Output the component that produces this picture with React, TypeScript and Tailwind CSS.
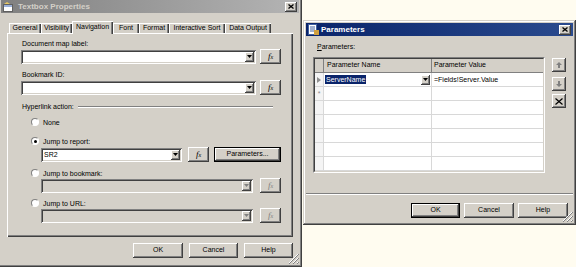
import React from "react";

const face = "bg-[#d4d0c8]";
const raised = "shadow-[inset_-1px_-1px_#404040,inset_1px_1px_#ffffff,inset_-2px_-2px_#808080]";
const sunken = "shadow-[inset_1px_1px_#808080,inset_-1px_-1px_#ffffff,inset_2px_2px_#404040,inset_-2px_-2px_#d4d0c8]";
const frame = "shadow-[inset_-1px_-1px_#404040,inset_1px_1px_#d4d0c8,inset_-2px_-2px_#808080,inset_2px_2px_#ffffff]";

function Arrow({ disabled }: { disabled?: boolean }) {
  return (
    <div className={`flex h-[10px] w-[9px] shrink-0 items-center justify-center ${face} ${raised}`}>
      <svg width="5" height="3" viewBox="0 0 5 3">
        <path d="M0 0h5L2.5 3z" fill={disabled ? "#808080" : "#000"} />
      </svg>
    </div>
  );
}

function Combo({ className, value, disabled }: { className: string; value?: string; disabled?: boolean }) {
  return (
    <div className={`flex h-[14px] shrink-0 items-center p-[2px] ${disabled ? "bg-[#d4d0c8]" : "bg-white"} ${sunken} ${className}`}>
      <span className="flex-1 pl-[1px] text-[7px] leading-[9px]">{value}</span>
      <Arrow disabled={disabled} />
    </div>
  );
}

function Fx({ disabled }: { disabled?: boolean }) {
  return (
    <div className={`flex h-[15px] w-[21px] shrink-0 items-center justify-center ${face} ${raised}`}>
      <span
        className={`font-['Liberation_Serif',serif] text-[9px] italic leading-none ${
          disabled ? "text-[#808080]" : "text-black"
        }`}
      >
        f<span className="text-[6px]">x</span>
      </span>
    </div>
  );
}

function Radio({ label, checked }: { label: string; checked?: boolean }) {
  return (
    <div className="flex h-[10px] items-center pl-[10px]">
      <div className="flex h-[8px] w-[8px] items-center justify-center rounded-full border border-t-[#808080] border-l-[#808080] border-b-white border-r-white bg-white">
        {checked && <div className="h-[3px] w-[3px] rounded-full bg-black" />}
      </div>
      <span className="ml-[4px] text-[7px] leading-[9px]">{label}</span>
    </div>
  );
}

function Btn({ label, className, def }: { label: string; className: string; def?: boolean }) {
  if (def) {
    return (
      <div className={`flex h-[15px] shrink-0 border border-black ${className}`}>
        <div className={`flex flex-1 items-center justify-center ${face} ${raised} text-[7px]`}>{label}</div>
      </div>
    );
  }
  return (
    <div className={`flex h-[15px] shrink-0 items-center justify-center ${face} ${raised} text-[7px] ${className}`}>
      {label}
    </div>
  );
}

function Close() {
  return (
    <div className={`ml-auto flex h-[10px] w-[12px] items-center justify-center ${face} ${raised}`}>
      <svg width="6" height="5" viewBox="0 0 6 5">
        <path d="M0.5 0.5l5 4M5.5 0.5l-5 4" stroke="#000" strokeWidth="1.3" />
      </svg>
    </div>
  );
}

function Grip() {
  return (
    <svg className="absolute bottom-[3px] right-[3px]" width="11" height="11" viewBox="0 0 11 11">
      <path d="M10 1L1 10M10 5L5 10M10 9L9 10" stroke="#ffffff" strokeWidth="1" />
      <path d="M11 1L1 11M11 5L5 11M11 9L9 11" stroke="#808080" strokeWidth="1" />
    </svg>
  );
}

const tabs = [
  { label: "General", w: "w-[32px]" },
  { label: "Visibility", w: "w-[31px]" },
  { label: "Navigation", w: "w-[41px]", active: true },
  { label: "Font", w: "w-[26px]" },
  { label: "Format", w: "w-[30px]" },
  { label: "Interactive Sort", w: "w-[56px]" },
  { label: "Data Output", w: "w-[46px]" },
];

function TextboxProperties() {
  return (
    <div className={`absolute left-[-2px] top-[-3px] flex h-[270px] w-[304px] flex-col p-[3px] ${face} ${frame}`}>
      <div className="flex h-[13px] items-center bg-gradient-to-r from-[#808080] to-[#b4b4b4] px-[2px]">
        <svg width="11" height="10" viewBox="0 0 11 10">
          <rect x="0.5" y="2.5" width="9" height="7" fill="#ffffff" stroke="#606060" />
          <rect x="1" y="3" width="8" height="2" fill="#9ab0d8" />
          <path d="M4 0l3 2H1z" fill="#e8c860" />
        </svg>
        <span className="ml-[4px] text-[8px] font-bold leading-none text-[#d4d0c8]">Textbox Properties</span>
        <Close />
      </div>

      <div className="ml-[8px] mt-[8px] flex h-[12px] items-end">
        {tabs.map((t) =>
          t.active ? (
            <div
              key={t.label}
              className={`relative z-10 -mb-[1px] flex h-[13px] items-center justify-center ${face} shadow-[inset_1px_1px_#ffffff,inset_-1px_0_#404040,inset_-2px_0_#808080] text-[7px] ${t.w}`}
            >
              {t.label}
            </div>
          ) : (
            <div
              key={t.label}
              className={`flex h-[10px] items-center justify-center ${face} shadow-[inset_1px_1px_#ffffff,inset_-1px_0_#404040,inset_-2px_0_#808080] text-[7px] ${t.w}`}
            >
              {t.label}
            </div>
          )
        )}
      </div>

      <div className={`mx-[6px] flex h-[204px] flex-col pl-[14px] pt-[6px] ${face} shadow-[inset_1px_1px_#ffffff,inset_-1px_-1px_#404040,inset_-2px_-2px_#808080]`}>
        <div className="h-[9px] pl-[1px] text-[7px] leading-[9px]">Document map label:</div>
        <div className="mt-[1px] flex h-[15px] items-center gap-[4px]">
          <Combo className="w-[235px]" />
          <Fx />
        </div>
        <div className="mt-[6px] h-[9px] pl-[1px] text-[7px] leading-[9px]">Bookmark ID:</div>
        <div className="mt-[1px] flex h-[15px] items-center gap-[4px]">
          <Combo className="w-[235px]" />
          <Fx />
        </div>
        <div className="mt-[7px] flex h-[9px] items-center pr-[20px]">
          <span className="pl-[1px] text-[7px] leading-[9px]">Hyperlink action:</span>
          <div className="ml-[4px] h-[2px] flex-1 border-t border-b border-t-[#808080] border-b-white" />
        </div>
        <div className="mt-[6px]">
          <Radio label="None" />
        </div>
        <div className="mt-[9px]">
          <Radio label="Jump to report:" checked />
        </div>
        <div className="ml-[20px] mt-[1px] flex h-[15px] items-center">
          <Combo className="w-[141px]" value="SR2" />
          <div className="ml-[6px]">
            <Fx />
          </div>
          <Btn label="Parameters..." className="ml-[5px] w-[67px]" def />
        </div>
        <div className="mt-[6px]">
          <Radio label="Jump to bookmark:" />
        </div>
        <div className="ml-[20px] flex h-[15px] items-center gap-[7px]">
          <Combo className="w-[212px]" disabled />
          <Fx disabled />
        </div>
        <div className="mt-[5px]">
          <Radio label="Jump to URL:" />
        </div>
        <div className="ml-[20px] flex h-[15px] items-center gap-[7px]">
          <Combo className="w-[212px]" disabled />
          <Fx disabled />
        </div>
      </div>

      <div className="mr-[6px] mt-[6px] flex justify-end gap-[6px]">
        <Btn label="OK" className="w-[50px]" />
        <Btn label="Cancel" className="w-[49px]" />
        <Btn label="Help" className="w-[49px]" />
      </div>
      <Grip />
    </div>
  );
}

const rowHeights = ["h-[14px]", "h-[14px]", "h-[14px]", "h-[14px]", "h-[14px]", "h-[14px]", "h-[14px]"];

function ParamGrid() {
  return (
    <div className="h-[116px] w-[232px] border border-t-[#808080] border-l-[#808080] border-b-white border-r-white">
      <div className="flex h-full flex-col border border-t-[#404040] border-l-[#404040] border-b-[#d4d0c8] border-r-[#d4d0c8] bg-white">
        <div className="flex h-[14px] shrink-0">
          <div className={`w-[9px] ${face} border-r border-b border-[#808080]`} />
          <div className={`flex w-[108px] items-center pl-[3px] ${face} border-r border-b border-[#808080] text-[7px]`}>
            Parameter Name
          </div>
          <div className={`flex flex-1 items-center pl-[2px] ${face} border-b border-[#808080] text-[7px]`}>
            Parameter Value
          </div>
        </div>
        {rowHeights.map((h, i) => (
          <div key={i} className={`flex shrink-0 ${h}`}>
            <div className="flex w-[9px] items-center justify-center border-r border-b border-[#d8d8d8] bg-[#f4f4f4]">
              {i === 0 && (
                <svg width="4" height="6" viewBox="0 0 4 6">
                  <path d="M0 0l4 3-4 3z" fill="#909090" />
                </svg>
              )}
              {i === 1 && <span className="text-[7px] leading-none text-[#909090]">*</span>}
            </div>
            <div className="flex w-[108px] items-center border-r border-b border-[#d8d8d8]">
              {i === 0 && (
                <div className="flex h-full w-full items-center pl-[1px] pr-[1px]">
                  <span className="bg-[#0a246a] px-[1px] text-[7px] leading-[9px] text-white">ServerName</span>
                  <div className="ml-auto">
                    <Arrow />
                  </div>
                </div>
              )}
            </div>
            <div className="flex flex-1 items-center border-b border-[#d8d8d8] pl-[2px]">
              {i === 0 && <span className="text-[7px] leading-[9px]">=Fields!Server.Value</span>}
            </div>
          </div>
        ))}
      </div>
    </div>
  );
}

function SideBtn({ children, className }: { children: React.ReactNode; className: string }) {
  return (
    <div className={`flex h-[14px] w-[14px] items-center justify-center ${face} ${raised} ${className}`}>{children}</div>
  );
}

function ParametersDialog() {
  return (
    <div className={`absolute left-[303px] top-[20px] flex h-[205px] w-[273px] flex-col p-[3px] ${face} ${frame}`}>
      <div className="flex h-[13px] items-center bg-gradient-to-r from-[#0a246a] to-[#2a4a8e] px-[2px]">
        <svg width="11" height="11" viewBox="0 0 11 11">
          <rect x="0.5" y="0.5" width="8" height="10" fill="#ffffff" stroke="#4060a0" />
          <path d="M2 3h5M2 5h5M2 7h5" stroke="#4060a0" />
          <rect x="6" y="6" width="5" height="5" fill="#d0a040" />
        </svg>
        <span className="ml-[2px] text-[8px] font-bold leading-none text-white">Parameters</span>
        <Close />
      </div>

      <div className="ml-[11px] mt-[6px] h-[9px] text-[7px] leading-[9px]">
        <span className="underline">P</span>arameters:
      </div>

      <div className="ml-[7px] mt-[6px] flex">
        <ParamGrid />
        <div className="ml-[7px] flex flex-col">
          <SideBtn className="mt-[1px]">
            <svg width="6" height="6" viewBox="0 0 6 6">
              <path d="M3 0l3 3H4v3H2V3H0z" fill="#808080" />
            </svg>
          </SideBtn>
          <SideBtn className="mt-[5px]">
            <svg width="6" height="6" viewBox="0 0 6 6">
              <path d="M3 6L0 3h2V0h2v3h2z" fill="#808080" />
            </svg>
          </SideBtn>
          <SideBtn className="mt-[3px]">
            <svg width="8" height="7" viewBox="0 0 8 7">
              <path d="M0.5 0.5l7 6M7.5 0.5l-7 6" stroke="#000" strokeWidth="1.2" />
            </svg>
          </SideBtn>
        </div>
      </div>

      <div className="mt-[20px] h-[2px] border-t border-b border-t-[#808080] border-b-white" />

      <div className="mr-[5px] mt-[8px] flex justify-end gap-[4px]">
        <Btn label="OK" className="w-[49px]" def />
        <Btn label="Cancel" className="w-[50px]" />
        <Btn label="Help" className="w-[50px]" />
      </div>
      <Grip />
    </div>
  );
}

export default function App() {
  return (
    <div className="relative h-[267px] w-[576px] overflow-hidden bg-[#fffcf0] font-['Liberation_Sans',Arial,sans-serif] text-black">
      <TextboxProperties />
      <ParametersDialog />
    </div>
  );
}
